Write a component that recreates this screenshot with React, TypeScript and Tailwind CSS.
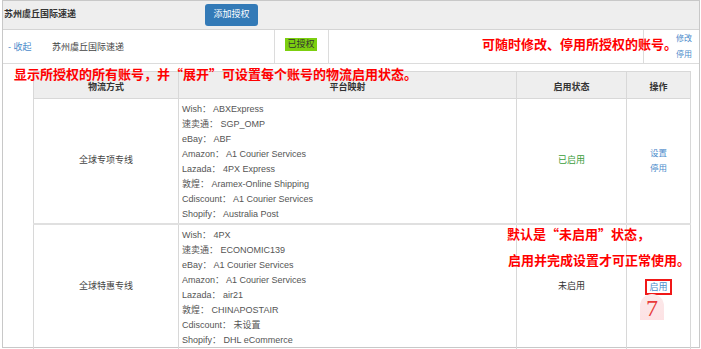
const base = "font-['Liberation_Sans','Noto_Sans_CJK_SC',sans-serif]";
const cjk = "font-['Noto_Sans_CJK_SC',sans-serif]";

type Route = {
  name: string;
  mappings: [string, string][];
  enabled: boolean;
};

const routes: Route[] = [
  {
    name: "全球专项专线",
    enabled: true,
    mappings: [
      ["Wish", "ABXExpress"],
      ["速卖通", "SGP_OMP"],
      ["eBay", "ABF"],
      ["Amazon", "A1 Courier Services"],
      ["Lazada", "4PX Express"],
      ["敦煌", "Aramex-Online Shipping"],
      ["Cdiscount", "A1 Courier Services"],
      ["Shopify", "Australia Post"],
    ],
  },
  {
    name: "全球特惠专线",
    enabled: false,
    mappings: [
      ["Wish", "4PX"],
      ["速卖通", "ECONOMIC139"],
      ["eBay", "A1 Courier Services"],
      ["Amazon", "A1 Courier Services"],
      ["Lazada", "air21"],
      ["敦煌", "CHINAPOSTAIR"],
      ["Cdiscount", "未设置"],
      ["Shopify", "DHL eCommerce"],
    ],
  },
];

const Note = ({ className, children }: { className: string; children: string }) => (
  <div className={`absolute text-[13px] leading-[13px] text-[#ff0000] font-bold whitespace-nowrap ${cjk} ${className}`}>
    {children}
  </div>
);

export default function App() {
  return (
    <div className={`relative w-[701px] h-[349px] bg-white overflow-hidden ${base}`}>
      <div className="ml-[2px] w-[698px] h-[348px] border border-[#c8c8c8] flex flex-col">
        {/* account header */}
        <div className="h-[29px] shrink-0 bg-[#eeeeee] border-b border-[#d4d4d4] flex items-center pl-[1px]">
          <span className="w-[201px] text-[9px] font-bold text-[#333]">苏州虞丘国际速递</span>
          <button className="h-[22px] w-[53px] rounded-[3px] bg-[#337ab7] text-white text-[9px]">添加授权</button>
        </div>

        {/* account row */}
        <div className="h-[34px] shrink-0 flex border-b border-[#dcdcdc] text-[9px]">
          <div className="w-[272px] border-r border-[#dcdcdc] flex items-center pl-[5px] pt-[2px]">
            <a href="#" className="w-[44px] text-[#4b8bcb]">- 收起</a>
            <span className="text-[#444]">苏州虞丘国际速递</span>
          </div>
          <div className="w-[54px] border-r border-[#dcdcdc] flex items-center pl-[10px] pb-[4px]">
            <span className="h-[13px] w-[32px] bg-[#7ccf0f] text-[#333] flex items-center justify-center text-[9px]">已授权</span>
          </div>
          <div className="w-[315px] border-r border-[#dcdcdc]" />
          <div className="flex-1 flex flex-col justify-center pl-[32px] text-[8px] leading-[16px] text-[#4b8bcb]">
            <a href="#">修改</a>
            <a href="#">停用</a>
          </div>
        </div>

        {/* routes */}
        <div className="flex-1 pl-[30px] pt-[7px]">
          <table className="table-fixed border-collapse w-[657px] text-[9px] text-[#555]">
            <colgroup>
              <col className="w-[145px]" />
              <col className="w-[338px]" />
              <col className="w-[110px]" />
              <col className="w-[64px]" />
            </colgroup>
            <thead>
              <tr className="h-[27px] bg-[#eeeeee] text-[#333] font-bold leading-[10px]">
                <th className="border border-[#d8d8d8] pt-[4px]">物流方式</th>
                <th className="border border-[#d8d8d8] pt-[4px]">平台映射</th>
                <th className="border border-[#d8d8d8] pt-[4px]">启用状态</th>
                <th className="border border-[#d8d8d8] pt-[4px]">操作</th>
              </tr>
            </thead>
            <tbody>
              {routes.map((r) => (
                <tr key={r.name} className="h-[124px] border-b-2 border-[#e0e0e0]">
                  <td className="border-x border-[#d8d8d8] text-center text-[#444]">{r.name}</td>
                  <td className="border-x border-[#d8d8d8] pl-[3px] py-[2px] align-middle">
                    {r.mappings.map(([p, v]) => (
                      <div key={p} className="h-[15px] leading-[15px] whitespace-nowrap">
                        {p}
                        <span className={cjk}>：</span> {v}
                      </div>
                    ))}
                  </td>
                  <td className="border-x border-[#d8d8d8] text-center">
                    {r.enabled ? (
                      <span className="text-[#3a9d3a]">已启用</span>
                    ) : (
                      <span className="text-[#333]">未启用</span>
                    )}
                  </td>
                  <td className="border-x border-[#d8d8d8] text-center">
                    {r.enabled ? (
                      <div className="flex flex-col items-center text-[8.5px] leading-[15px] text-[#4b8bcb]">
                        <a href="#">设置</a>
                        <a href="#">停用</a>
                      </div>
                    ) : (
                      <div className="flex justify-center">
                        <a href="#" className="h-[16px] w-[27px] border-2 border-[#f01818] text-[#4b8bcb] flex items-center justify-center leading-none">
                          启用
                        </a>
                      </div>
                    )}
                  </td>
                </tr>
              ))}
            </tbody>
          </table>
        </div>
      </div>

      {/* annotations */}
      <Note className="left-[482px] top-[37px]">可随时修改、停用所授权的账号。</Note>
      <Note className="left-[14px] top-[67px]">显示所授权的所有账号，并“展开”可设置每个账号的物流启用状态。</Note>
      <Note className="left-[507px] top-[227px]">默认是“未启用”状态，</Note>
      <Note className="left-[508px] top-[253px]">启用并完成设置才可正常使用。</Note>
      <div className="absolute left-[640px] top-[294px] w-[24px] h-[26px] rounded-t-full bg-gradient-to-b from-[#fbe9ea] to-[#fde2e4] flex items-end justify-center">
        <span className="font-['Liberation_Serif',serif] text-[24px] leading-[24px] text-[#e83a3a]">7</span>
      </div>
    </div>
  );
}
